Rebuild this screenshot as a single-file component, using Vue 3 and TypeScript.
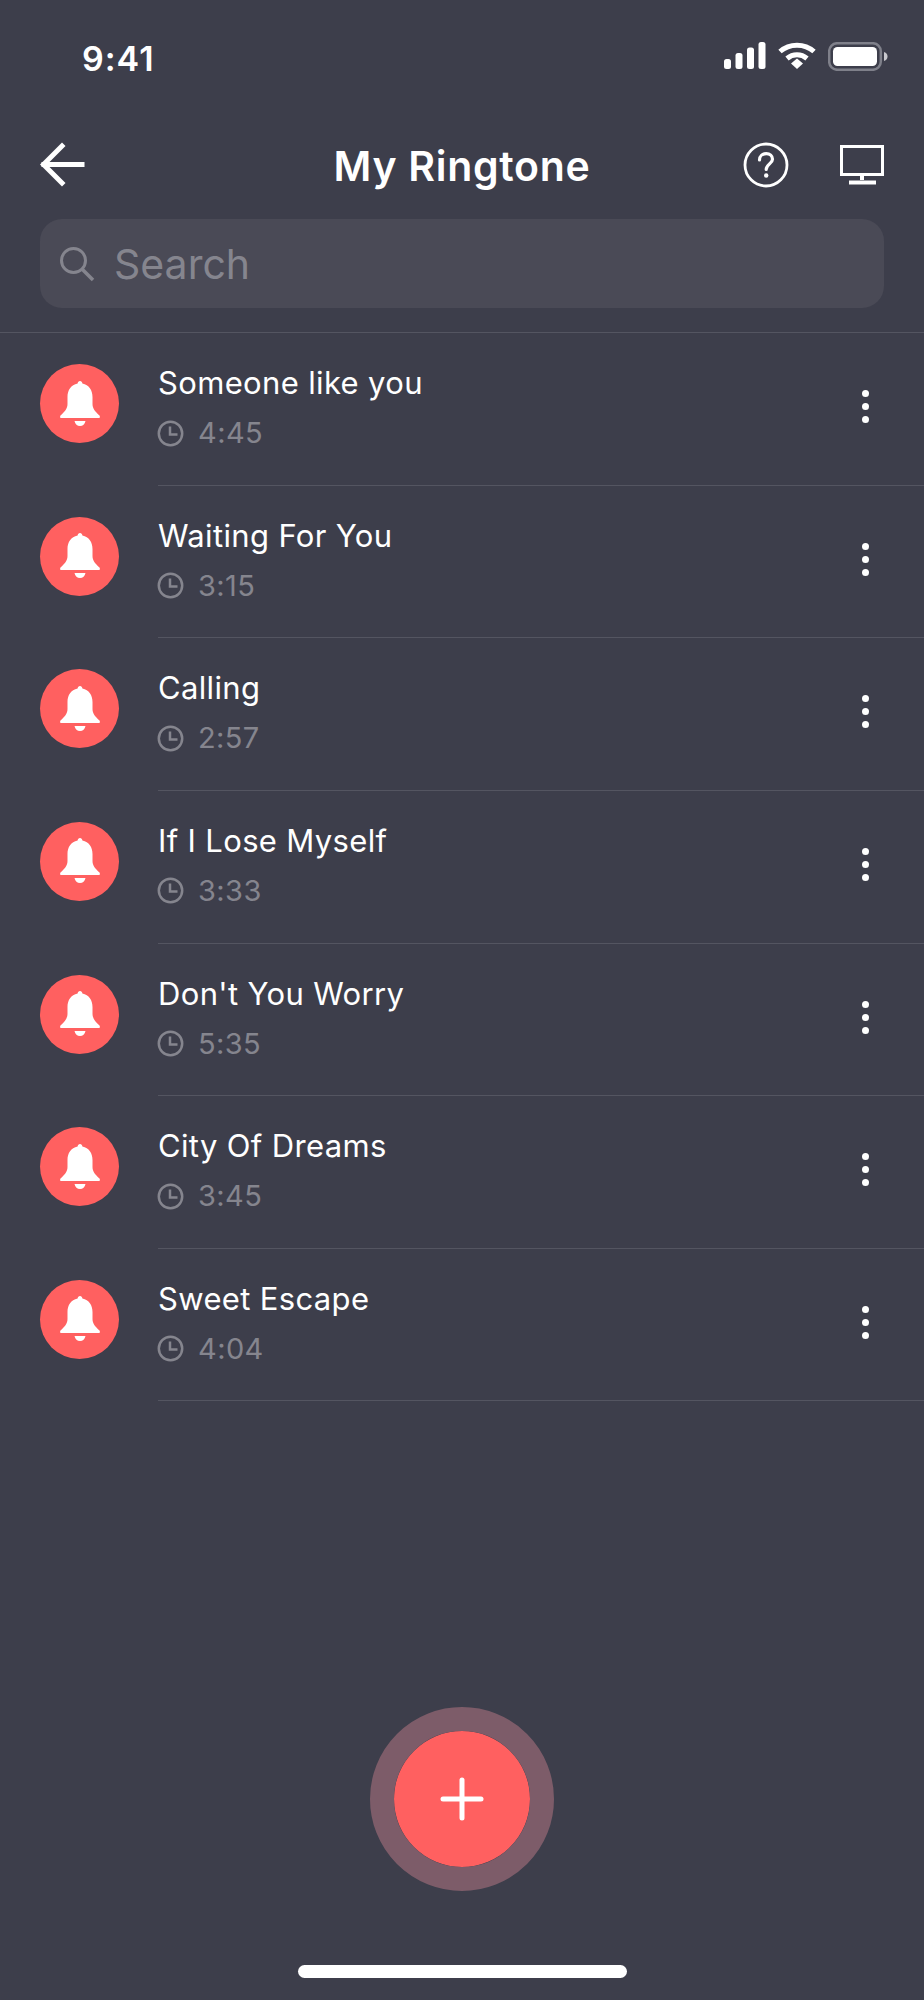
<script setup lang="ts">
interface Tone { title: string; time: string }
const tones: Tone[] = [
  { title: 'Someone like you', time: '4:45' },
  { title: 'Waiting For You', time: '3:15' },
  { title: 'Calling', time: '2:57' },
  { title: 'If I Lose Myself', time: '3:33' },
  { title: "Don't You Worry", time: '5:35' },
  { title: 'City Of Dreams', time: '3:45' },
  { title: 'Sweet Escape', time: '4:04' },
]
</script>

<template>
  <div class="screen">
    <div class="status">
      <span class="clock-text">9:41</span>
      <div class="status-icons">
        <svg width="42" height="27" viewBox="0 0 42 27" fill="#fff">
          <rect x="0" y="17" width="7" height="10" rx="2.5" />
          <rect x="11.500" y="11" width="7" height="16" rx="2.500" />
          <rect x="23" y="5.500" width="7" height="21.500" rx="2.500" />
          <rect x="34.500" y="0" width="7" height="27" rx="2.500" />
        </svg>
        <svg width="38" height="27" viewBox="0 0 38 27" fill="none" stroke="#fff" stroke-width="5">
          <path d="M2 9.500C11.500 1 26.500 1 36 9.500" />
          <path d="M9 16.500c5.800-5 14.200-5 20 0" />
          <path d="M13 21.500l6-5 6 5-6 5.500z" fill="#fff" stroke="none" />
        </svg>
        <svg width="60" height="29" viewBox="0 0 60 29">
          <rect x="1.200" y="1.200" width="51.600" height="26.600" rx="8" fill="none" stroke="#7f808a" stroke-width="2.500" />
          <rect x="5" y="5" width="44" height="19" rx="4.500" fill="#fff" />
          <path d="M56 10c2.500.6 3.500 2.400 3.500 4.500S58.500 18.400 56 19z" fill="#c9c9ce" />
        </svg>
      </div>
    </div>

    <header class="head">
      <svg class="arrow" width="46" height="46" viewBox="0 0 46 46" fill="none" stroke="#fff" stroke-width="5" stroke-linecap="square">
        <path d="M4 22.500H42" />
        <path d="M22 4L3.500 22.500L22 41" />
      </svg>
      <h1 class="heading">My Ringtone</h1>
      <div class="head-actions">
        <svg width="46" height="46" viewBox="0 0 46 46" fill="none" stroke="#fff" stroke-width="2.800">
          <circle cx="23" cy="23" r="21" />
          <path d="M16.500 18c0-3.800 3-6.300 6.700-6.300s6.300 2.400 6.300 5.500c0 4.500-6.300 5-6.300 10.300" stroke-linecap="round" stroke-width="3.200" />
          <circle cx="23.200" cy="33.500" r="2.200" fill="#fff" stroke="none" />
        </svg>
        <svg width="44" height="40" viewBox="0 0 44 40" fill="none" stroke="#fff" stroke-width="3">
          <rect x="1.500" y="1.500" width="41" height="28" />
          <path d="M22 30v5" stroke-width="4" />
          <path d="M9 37.500H36" stroke-width="4" />
        </svg>
      </div>
    </header>

    <div class="search">
      <svg width="36" height="36" viewBox="0 0 36 36" fill="none" stroke="#85858e" stroke-width="3">
        <circle cx="14.500" cy="14.500" r="12" />
        <path d="M23.500 23.500L34 34" stroke-width="3.500" />
      </svg>
      <span class="search-text">Search</span>
    </div>

    <ul class="list">
      <li v-for="tone in tones" :key="tone.title" class="row">
        <div class="avatar">
          <svg width="40" height="46" viewBox="0 0 40 46" fill="#fff">
            <path d="M20 0c1.300 0 2.200 1 2.400 2.600C29 3.800 32.500 9.500 32.500 16v7c0 4.500 3 8 7 11.500.6.600.5 2.500-.5 2.500H1c-1 0-1.100-1.900-.5-2.500C4.500 31 7.500 27.500 7.500 23v-7C7.500 9.500 11 3.800 17.600 2.600 17.800 1 18.700 0 20 0z" />
            <path d="M14.500 40h11c-.5 3-2.800 5-5.500 5s-5-2-5.500-5z" />
          </svg>
        </div>
        <div class="body">
          <div class="info">
            <div class="title">{{ tone.title }}</div>
            <div class="meta">
              <svg width="27" height="27" viewBox="0 0 27 27" fill="none" stroke="#85858e" stroke-width="2.500">
                <circle cx="13.500" cy="13.500" r="11.700" />
                <path d="M13 6.500V14.500H20.500" />
              </svg>
              <span>{{ tone.time }}</span>
            </div>
          </div>
          <div class="kebab"><i></i><i></i><i></i></div>
        </div>
      </li>
    </ul>

    <div class="fab-wrap">
      <div class="fab">
        <svg width="44" height="44" viewBox="0 0 44 44" stroke="#fff" stroke-width="5" stroke-linecap="round">
          <path d="M22 3V41" />
          <path d="M3 22H41" />
        </svg>
      </div>
    </div>
    <div class="home"></div>
  </div>
</template>

<style scoped>
.screen {
  width: 924px;
  height: 2000px;
  background: #3d3e4b;
  display: flex;
  flex-direction: column;
  font-family: Inter, "Liberation Sans", sans-serif;
  color: #fff;
  overflow: hidden;
}
.status {
  height: 140px;
  box-sizing: border-box;
  padding: 42px 36px 0 82px;
  display: flex;
  justify-content: space-between;
  align-items: flex-start;
}
.clock-text {
  font-size: 34px;
  font-weight: 600;
  line-height: 34px;
  letter-spacing: 1px;
}
.status-icons {
  display: flex;
  align-items: flex-start;
  gap: 12px;
}
.head {
  height: 46px;
  padding: 0 40px;
  display: grid;
  grid-template-columns: 1fr auto 1fr;
  align-items: center;
}
.arrow { justify-self: start; }
.heading {
  margin: 3px 0 0;
  font-size: 41px;
  font-weight: 600;
  line-height: 46px;
  letter-spacing: 0.7px;
  align-self: start;
}
.head-actions {
  justify-self: end;
  display: flex;
  align-items: center;
  gap: 51px;
}
.search {
  margin: 33px 40px 0;
  height: 89px;
  border-radius: 22px;
  background: #4a4a56;
  display: flex;
  align-items: center;
  padding-left: 19px;
  gap: 19px;
}
.search-text {
  font-size: 41px;
  color: #85858e;
}
.list {
  list-style: none;
  margin: 24px 0 0;
  padding: 0;
  border-top: 1px solid #545561;
}
.row {
  height: 152.65px;
  display: flex;
  padding-left: 40px;
}
.avatar {
  width: 79px;
  height: 79px;
  margin-top: 31px;
  border-radius: 50%;
  background: #ff6060;
  display: flex;
  align-items: center;
  justify-content: center;
  flex: none;
}
.body {
  margin-left: 39px;
  flex: 1;
  border-bottom: 1px solid #545561;
  display: flex;
  justify-content: space-between;
  padding-right: 55px;
}
.info { padding-top: 31px; }
.title {
  font-size: 31px;
  line-height: 38px;
  letter-spacing: 0.35px;
}
.meta {
  margin-top: 12px;
  margin-left: -1px;
  display: flex;
  align-items: center;
  gap: 14px;
  font-size: 29px;
  line-height: 38px;
  letter-spacing: 0.4px;
  color: #85858e;
}
.kebab {
  display: flex;
  flex-direction: column;
  gap: 6px;
  padding-top: 57px;
}
.kebab i {
  display: block;
  width: 7px;
  height: 7px;
  border-radius: 50%;
  background: #fff;
}
.fab-wrap {
  margin-top: auto;
  display: flex;
  justify-content: center;
}
.fab {
  width: 136px;
  height: 136px;
  border: 24px solid #7d5c69;
  border-radius: 50%;
  background: #ff6060;
  background-clip: padding-box;
  display: flex;
  align-items: center;
  justify-content: center;
}
.home {
  width: 329px;
  height: 13px;
  margin: 74px auto 22px;
  border-radius: 7px;
  background: #fff;
}
</style>
